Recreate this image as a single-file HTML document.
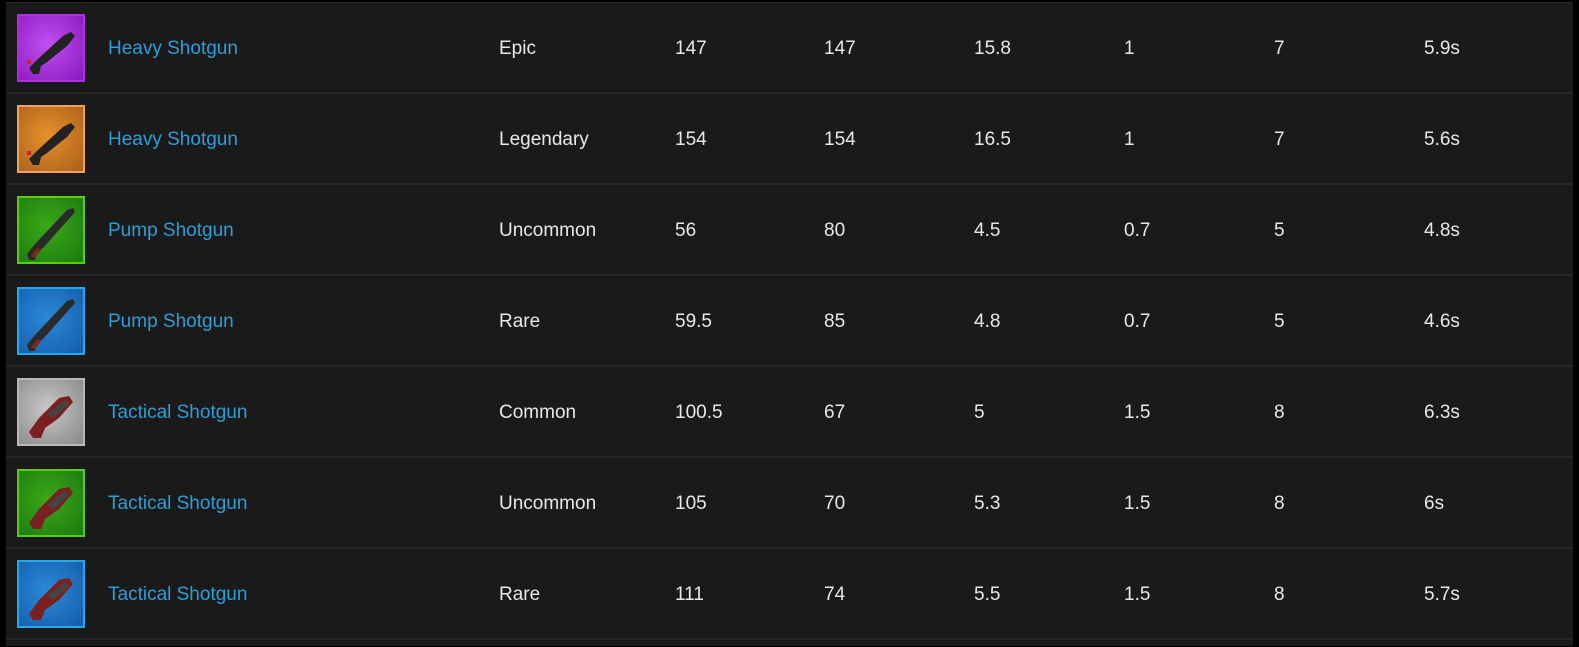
<!DOCTYPE html>
<html><head><style>
body{margin:0;background:#000;width:1579px;height:647px;overflow:hidden;font-family:"Liberation Sans",sans-serif;}
.t{position:absolute;left:6px;top:2px;width:1567px;height:643px;background:#1a1a1a;border-top:1px solid #2a2a2a}
.r{position:absolute;left:0;width:1567px;height:89px;border-bottom:2px solid #262626}
.ic{position:absolute;left:11px;top:11px;width:64px;height:64px;border:2px solid}
.c{position:absolute;top:35px;font-size:19px;color:#e8e8e8;white-space:nowrap}
.n{color:#2a9fd8}
svg{position:absolute;left:0;top:0}
</style></head><body><div class="t">
<script>
const rows=[
["Heavy Shotgun","Epic","147","147","15.8","1","7","5.9s","#b22fe0","#c050f0","#8a18c0",0],
["Heavy Shotgun","Legendary","154","154","16.5","1","7","5.6s","#f0a060","#e8902a","#a8601a",0],
["Pump Shotgun","Uncommon","56","80","4.5","0.7","5","4.8s","#5ccc10","#3aa818","#1c7a10",1],
["Pump Shotgun","Rare","59.5","85","4.8","0.7","5","4.6s","#20a8f0","#2a8ad8","#145ca8",1],
["Tactical Shotgun","Common","100.5","67","5","1.5","8","6.3s","#b8b8b8","#c8c8c8","#888",2],
["Tactical Shotgun","Uncommon","105","70","5.3","1.5","8","6s","#5ccc10","#3aa818","#1c7a10",2],
["Tactical Shotgun","Rare","111","74","5.5","1.5","8","5.7s","#20a8f0","#2a8ad8","#145ca8",2]];
const xs=[102,493,669,818,968,1118,1268,1418];
const guns=[
'<path d="M10 52 L20 42 L44 20 L52 16 L56 20 L48 30 L28 46 L22 50 L20 58 L14 58 Z" fill="#222"/><rect x="8" y="44" width="4" height="4" fill="#c22"/>',
'<path d="M8 56 L16 46 L48 12 L54 10 L56 14 L24 50 L18 54 L16 62 L10 62 Z" fill="#2a2a2a"/><path d="M12 58 L18 50 L22 52 L16 60Z" fill="#7a2a1a"/>',
'<path d="M10 52 L20 38 L40 18 L50 16 L54 22 L40 38 L26 48 L22 58 L14 58 Z" fill="#7a2020"/><path d="M28 34 L46 20 L50 24 L34 38Z" fill="#444"/>'];
let h='';
rows.forEach((r,i)=>{
h+=`<div class="r" style="top:${i*91}px"><div class="ic" style="border-color:${r[8]};background:radial-gradient(circle at 45% 45%,${r[9]},${r[10]})"><svg width="64" height="64">${guns[r[11]]}</svg></div>`;
for(let k=0;k<8;k++)h+=`<div class="c${k==0?' n':''}" style="left:${xs[k]}px">${r[k]}</div>`;
h+='</div>';});
document.write(h);
</script>
</div></body></html>
